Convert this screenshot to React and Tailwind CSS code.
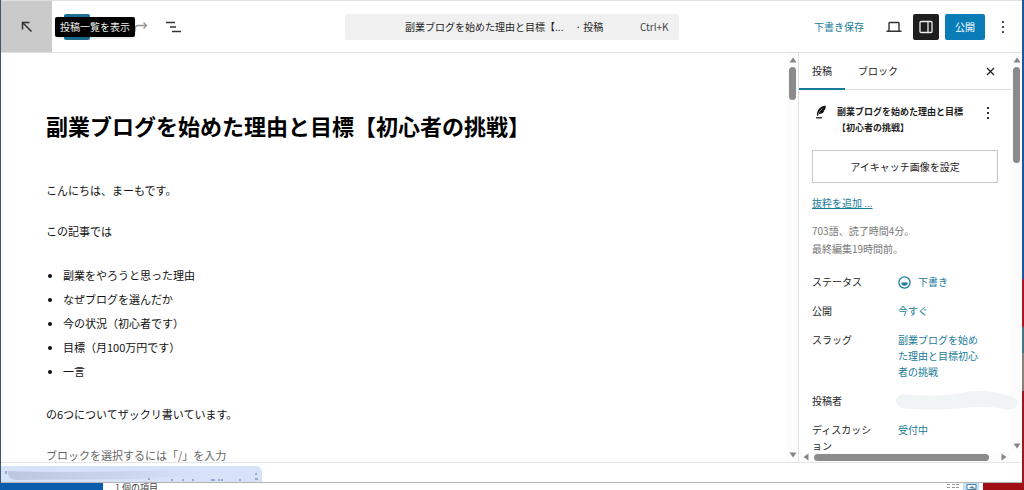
import React, { useState } from 'react';

const listItems = [
  '副業をやろうと思った理由',
  'なぜブログを選んだか',
  '今の状況（初心者です）',
  '目標（月100万円です）',
  '一言',
];

const MoreIcon = () => (
  <svg width="4" height="14" viewBox="0 0 4 14" fill="currentColor">
    <circle cx="2" cy="2" r="1.1" />
    <circle cx="2" cy="7" r="1.1" />
    <circle cx="2" cy="12" r="1.1" />
  </svg>
);

const Arrow = ({ className }) => (
  <svg className={`shrink-0 ${className}`} width="8" height="6" viewBox="0 0 8 6" fill="#858585">
    <path d="M4 0.5 7.5 5.5h-7z" />
  </svg>
);

const VerticalScrollbar = ({ thumb }) => (
  <div className="flex w-[11px] shrink-0 flex-col items-center justify-between bg-[#fcfcfc] pt-1 pb-1">
    <div className="flex flex-col items-center gap-1">
      <Arrow className="" />
      <div className={`w-[7px] rounded-full bg-[#8b8b8b] ${thumb}`}></div>
    </div>
    <Arrow className="rotate-180" />
  </div>
);

const Row = ({ label, children }) => (
  <div className="flex">
    <dt className="w-[86px] shrink-0 pr-5 text-[#1e1e1e]">{label}</dt>
    <dd className="min-w-0 text-[#1a7b99]">{children}</dd>
  </div>
);

const Header = () => (
  <header className="flex h-[53px] shrink-0 border-y border-[#e0e0e0] bg-white text-[10px]">
    <div className="flex flex-1 items-center">
      <button aria-label="投稿一覧を表示" className="flex w-[51px] items-center justify-center self-stretch bg-[#cacaca] text-[#333]">
        <svg width="12" height="12" viewBox="0 0 12 12" fill="none" stroke="currentColor" strokeWidth="1.5">
          <path d="M1.5 8.5v-7h7M1.5 1.5l9 9" />
        </svg>
      </button>
      <div className="relative ml-3 flex items-center">
        <button aria-label="ブロックを追加" className="h-[26px] w-[26px] rounded-xs bg-[#1c6f95]"></button>
        <div role="tooltip" className="absolute top-[3px] -left-[9px] rounded-xs bg-black px-[5px] leading-5 whitespace-nowrap text-[#f0f0f0] shadow-sm">
          投稿一覧を表示
        </div>
      </div>
      <button aria-label="やり直す" className="ml-[44px] text-[#949494]">
        <svg width="14" height="12" viewBox="0 0 14 12" fill="none" stroke="currentColor" strokeWidth="1.3">
          <path d="M1 10.5V8Q1 4.5 4.5 4.5H12.5M9.5 1.5l3 3-3 3" />
        </svg>
      </button>
      <button aria-label="ドキュメント概観" className="ml-[18px] text-[#333]">
        <svg width="15" height="12" viewBox="0 0 15 12" fill="none" stroke="currentColor" strokeWidth="1.4">
          <path d="M0 1.5h9M4 6h6M6 10.5h9" />
        </svg>
      </button>
    </div>

    <button className="flex h-[26px] w-[334px] shrink items-center self-center rounded-xs bg-[#f0f0f0] pr-[10px] pl-6 text-[#1e1e1e]">
      <span className="flex-1 text-center whitespace-nowrap">
        副業ブログを始めた理由と目標【...
        <span className="ml-3">· 投稿</span>
      </span>
      <span className="text-[#444]">Ctrl+K</span>
    </button>

    <div className="flex flex-1 items-center justify-end">
      <button className="text-[#1a7b99]">下書き保存</button>
      <button aria-label="表示" className="ml-[22px] text-[#333]">
        <svg width="16" height="12" viewBox="0 0 16 12" fill="none" stroke="currentColor" strokeWidth="1.4">
          <path d="M3 9.5V2.2Q3 1.5 3.7 1.5h8.6q.7 0 .7.7v7.3M0.5 10.2h15" />
        </svg>
      </button>
      <button aria-label="設定" className="ml-[11px] flex h-[26px] w-[26px] items-center justify-center rounded-xs bg-[#1e1e1e] text-[#eee]">
        <svg width="14" height="14" viewBox="0 0 14 14" fill="none" stroke="currentColor" strokeWidth="1.3">
          <rect x="1" y="1.5" width="12" height="11" rx="1" />
          <path d="M9 1.5v11" />
        </svg>
      </button>
      <button className="ml-[6px] h-[26px] w-10 rounded-xs bg-[#0a7cb8] text-white">公開</button>
      <button aria-label="オプション" className="mr-[17px] ml-4 text-[#1e1e1e]">
        <MoreIcon />
      </button>
    </div>
  </header>
);

const Editor = () => (
  <main className="flex min-w-0 flex-1 overflow-hidden">
    <article className="min-w-0 flex-1 pt-14 pl-[45px] text-[11px] leading-6 text-[#111]">
      <h1 className="text-[22px] leading-8 font-bold text-black">副業ブログを始めた理由と目標【初心者の挑戦】</h1>
      <p className="mt-[37px]">こんにちは、まーもです。</p>
      <p className="mt-[17px]">この記事では</p>
      <ul className="mt-5 list-disc pl-[17px]">
        {listItems.map((item) => (
          <li key={item}>{item}</li>
        ))}
      </ul>
      <p className="mt-[19px]">の6つについてザックリ書いています。</p>
      <p className="mt-[17px] text-[#666]">ブロックを選択するには「/」を入力</p>
    </article>
    <VerticalScrollbar thumb="h-[33px]" />
  </main>
);

const Sidebar = () => {
  const [tab, setTab] = useState('post');

  return (
    <aside className="flex w-[224px] shrink-0 border-l border-[#e0e0e0] text-[10px] leading-4">
      <div className="flex min-w-0 flex-1 flex-col">
        <div role="tablist" className="flex h-[37px] shrink-0 items-stretch border-b border-[#e0e0e0] text-[#1e1e1e]">
          <button
            role="tab"
            aria-selected={tab === 'post'}
            onClick={() => setTab('post')}
            className={`-mb-px border-b-2 px-[13px] ${tab === 'post' ? 'border-[#1a7b99]' : 'border-transparent'}`}
          >
            投稿
          </button>
          <button
            role="tab"
            aria-selected={tab === 'block'}
            onClick={() => setTab('block')}
            className={`-mb-px border-b-2 px-[13px] ${tab === 'block' ? 'border-[#1a7b99]' : 'border-transparent'}`}
          >
            ブロック
          </button>
          <button aria-label="閉じる" className="mr-4 ml-auto">
            <svg width="9" height="9" viewBox="0 0 9 9" fill="none" stroke="#222" strokeWidth="1.3">
              <path d="M1 1l7 7M8 1l-7 7" />
            </svg>
          </button>
        </div>

        <div className="min-h-0 flex-1 overflow-y-clip pt-[14px] pr-[13px] pl-[13px]">
          <div className="flex">
            <svg className="mt-px ml-[3px] shrink-0" width="12" height="14" viewBox="0 0 12 14">
              <path d="M2 10.5C1.5 5.5 4.5 1.5 10.5 0.5 11 3 10.5 4 9.5 5L8.5 5.4 9.3 5.7C8.5 7.8 6.5 9 3.8 9L2.8 11z" fill="#111" />
              <path d="M3 9.5C4 7 5.5 5 7.5 3.5" stroke="#fff" strokeWidth="0.5" fill="none" />
              <path d="M1 12.8h6" stroke="#111" strokeWidth="1.2" />
            </svg>
            <h2 className="ml-[10px] text-[9px] leading-4 font-bold whitespace-nowrap text-[#1e1e1e]">
              副業ブログを始めた理由と目標
              <br />
              【初心者の挑戦】
            </h2>
            <button aria-label="操作" className="mt-[2px] mr-2 ml-auto h-[14px]">
              <MoreIcon />
            </button>
          </div>

          <button className="mt-[14px] h-[33px] w-full border border-[#c8c8c8] text-[#1e1e1e]">
            アイキャッチ画像を設定
          </button>
          <a href="#" className="mt-3 block text-[#1a7b99] underline">抜粋を追加 ...</a>
          <p className="mt-[11px] leading-[18px] text-[#777]">
            703語、読了時間4分。
            <br />
            最終編集19時間前。
          </p>

          <dl className="mt-4 flex flex-col gap-[13px]">
            <Row label="ステータス">
              <button className="flex items-center gap-[7px]">
                <svg width="13" height="13" viewBox="0 0 13 13" fill="none">
                  <circle cx="6.5" cy="6.5" r="5.6" stroke="currentColor" strokeWidth="1.3" />
                  <path d="M3.3 6.5h6.4a3.2 3.2 0 0 1-6.4 0z" fill="currentColor" />
                </svg>
                下書き
              </button>
            </Row>
            <Row label="公開">
              <button className="block">今すぐ</button>
            </Row>
            <Row label="スラッグ">
              <button className="block max-w-[86px] text-left">副業ブログを始めた理由と目標初心者の挑戦</button>
            </Row>
            <Row label="投稿者">
              <svg className="relative z-10 overflow-visible" width="100" height="16" viewBox="0 0 100 16">
                <path
                  d="M4 1Q40 5 62 0T108 2Q122 5 119 12 116 18 106 16 86 12 65 15 30 18 3 15-8 7 4 1z"
                  fill="#f0f4f5"
                />
              </svg>
            </Row>
            <Row label="ディスカッション">
              <button className="block">受付中</button>
            </Row>
          </dl>
        </div>

        <div className="flex h-[10px] shrink-0 items-center gap-1 bg-[#fcfcfc] px-[3px]">
          <Arrow className="-rotate-90" />
          <div className="h-[7px] w-[175px] rounded-full bg-[#8b8b8b]"></div>
          <Arrow className="ml-auto rotate-90" />
        </div>
      </div>
      <div className="flex pb-[9px]">
        <VerticalScrollbar thumb="h-[96px]" />
      </div>
    </aside>
  );
};

const App = () => {
  return (
    <div className="flex h-screen flex-col overflow-hidden bg-white font-['Noto_Sans_CJK_JP',sans-serif]">
      <div className="flex min-h-0 flex-1">
        <div className="w-px shrink-0 bg-[#3d5a6c]"></div>
        <div className="relative flex min-w-0 flex-1 flex-col border-b border-[#b5b5b5]">
          <Header />
          <div className="flex min-h-0 flex-1">
            <Editor />
            <Sidebar />
          </div>
          <footer className="h-5 shrink-0 border-t border-[#e4e4e4]"></footer>

          {/* リンク先のステータス表示 */}
          <div className="absolute bottom-0 left-0 h-4 w-[261px] overflow-hidden rounded-tr-md bg-[#d6e2f8]">
            <svg width="261" height="16" viewBox="0 0 261 16">
              <defs>
                <linearGradient id="smudge" x1="0" x2="1">
                  <stop offset="0" stopColor="#bcc6dd" />
                  <stop offset="0.6" stopColor="#cbd6ed" />
                  <stop offset="1" stopColor="#d6e2f8" />
                </linearGradient>
              </defs>
              <path d="M7 5Q60 7 130 5T200 9L130 13 14 14Q6 12 7 5z" fill="url(#smudge)" />
              <path
                d="M5 5v3M148 12v2M171 13v2M182 13v2M192 13v2M210 14h4M217 14h2M221 13v2M239 13v2M255 7v2M254 13h3"
                stroke="#5872a8"
                strokeWidth="1"
              />
            </svg>
          </div>
        </div>
        <div className="flex w-[2px] shrink-0 flex-col">
          <div className="flex-[278] bg-[#1d55a0]"></div>
          <div className="flex-[48] bg-[#b01523]"></div>
          <div className="flex-[26] bg-[#47708c]"></div>
          <div className="flex-[38] bg-[#8b8078]"></div>
          <div className="flex-[92] bg-[#a01622]"></div>
        </div>
      </div>

      {/* 背後のウィンドウ */}
      <div className="flex h-[7px] shrink-0 overflow-hidden">
        <div className="w-[103px] bg-[#0a5cad]"></div>
        <div className="flex flex-1 justify-between overflow-hidden bg-white pl-3 text-[9px] text-[#444]">
          <span className="leading-[10px]">1 個の項目</span>
          <svg width="36" height="7" viewBox="0 0 36 7" fill="none">
            <path d="M0 1.5h3M5 1.5h3M9 1.5h3M0 4.5h3M5 4.5h3M9 4.5h3" stroke="#999" />
            <path d="M16 0h16v7H16z" fill="#bfe0f5" />
            <path d="M20 1.5h9v5h-9z" fill="#fff" stroke="#4c7ea0" />
            <path d="M22 5l3-2 4 3z" fill="#4c7ea0" />
          </svg>
        </div>
        <div className="w-[41px] bg-[#a00f14]"></div>
      </div>
    </div>
  );
};

export default App;
